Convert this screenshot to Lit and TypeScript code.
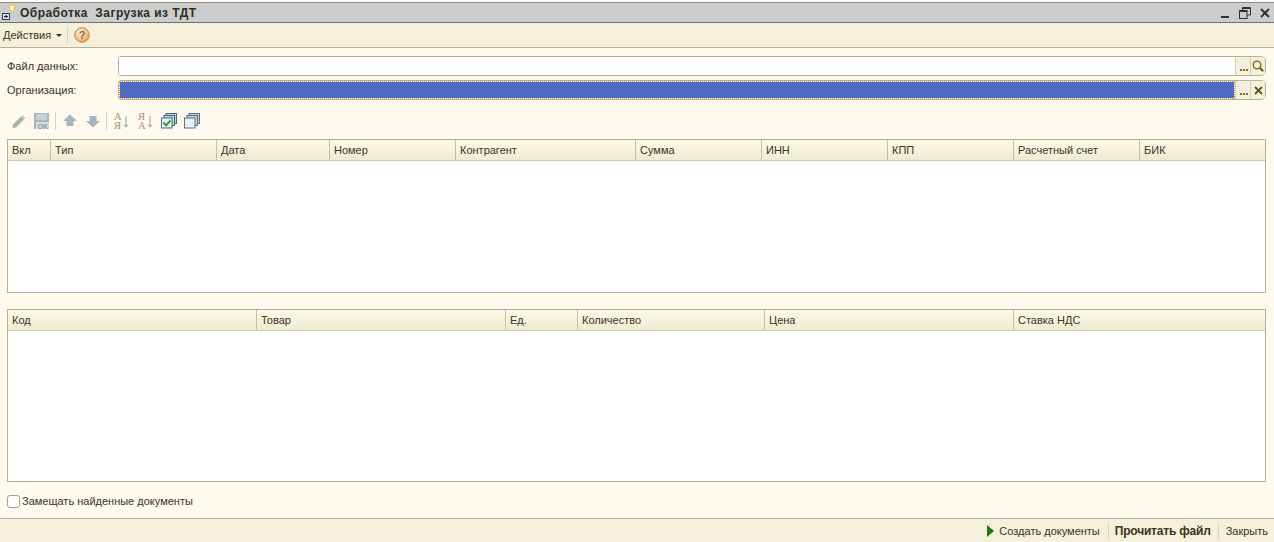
import { LitElement, html, css } from "lit";
import { customElement } from "lit/decorators.js";

const T1: [string, number][] = [["Вкл",43],["Тип",166],["Дата",113],["Номер",126],["Контрагент",180],["Сумма",126],["ИНН",126],["КПП",126],["Расчетный счет",126],["БИК",127]];
const T2: [string, number][] = [["Код",249],["Товар",249],["Ед.",72],["Количество",187],["Цена",249],["Ставка НДС",253]];

@customElement("app-root")
export class AppRoot extends LitElement {
  static styles = css`
    :host { display: flex; flex-direction: column; width: 1274px; height: 542px; overflow: hidden; background: #fffaee;
      font-family: "Liberation Sans", Arial, sans-serif; font-size: 11px; color: #40321e; }
    svg { display: block; flex: none; }
    .title { margin-top: 2px; flex: none; box-sizing: border-box; border-top: 1px solid #8c8c8c; border-bottom: 1px solid #6e6e6e;
      background: #cdcdcd; display: flex; align-items: center; padding: 0 4px 0 1px; height: 21px; }
    .ticon { margin-top: -2px; }
    .title b { margin-left: 2px; font-size: 12px; color: #2c2c28; white-space: pre; letter-spacing: .45px; }
    .spacer { flex: 1; }
    .winbtns { display: flex; gap: 9px; align-items: center; }
    .menu { flex: none; height: 25px; box-sizing: border-box; background: #f4f0dc; border-bottom: 1px solid #b9b18d; display: flex; align-items: center; padding-left: 3px; }
    .caret { width: 0; height: 0; border: 3px solid transparent; border-top-color: #40321e; border-bottom: 0; margin: 1px 5px 0 5px; }
    .vsep { width: 1px; height: 18px; background: #dcd6b8; }
    .help { margin-left: 6px; }
    .form { flex: none; display: grid; grid-template-columns: 118px 1148px; row-gap: 4px; padding-top: 8px; align-items: center; }
    .label { padding-left: 7px; }
    .field { height: 20px; box-sizing: border-box; border: 1px solid #b9b18d; border-radius: 3px 5px 5px 3px; background: #fff; display: flex; overflow: hidden; }
    .input { flex: 1; background: #fff; }
    .sel { flex: 1; margin: 1px; background: #4f6ac2; outline: 1px dotted #c8a028; }
    .fbtn { width: 15px; box-sizing: border-box; flex: none; background: #f4f0dc; border-left: 1px solid #d6d0b0; display: flex; align-items: center; justify-content: center; }
    .tools { flex: none; height: 20px; margin-top: 11px; display: flex; align-items: center; padding-left: 11px; }
    .i-save { margin-left: 6px; }
    .tsep { width: 1px; height: 18px; background: #dcd6b8; margin: 0 6px 0 5px; }
    .i-down { margin-left: 7px; }
    .i-sort2 { margin-left: 7px; }
    .i-stack { margin-left: 7px; }
    .table { flex: none; margin-left: 7px; width: 1259px; box-sizing: border-box; border: 1px solid #b9b18d; background: #fff; }
    .t1 { height: 154px; margin-top: 8px; }
    .t2 { height: 173px; margin-top: 16px; }
    .head { display: flex; height: 21px; box-sizing: border-box; border-bottom: 1px solid #d2cca8; background: linear-gradient(#fdf9e8, #efebd2); }
    .col { box-sizing: border-box; flex: none; border-right: 1px solid #c8c19c; padding-left: 4px; line-height: 20px; white-space: nowrap; overflow: hidden; }
    .col:last-child { border-right: 0; }
    .check { flex: none; display: flex; align-items: center; margin: 12px 0 0 7px; height: 14px; gap: 2px; }
    .box { width: 13px; height: 13px; box-sizing: border-box; border: 1px solid #a8a080; border-radius: 3px; background: #fff; }
    .footer { flex: none; margin-top: 10px; height: 24px; box-sizing: border-box; border-top: 1px solid #b9b18d; background: #f4f0dc; display: flex; align-items: center; justify-content: flex-end; padding-right: 6px; }
    .footer .sep { width: 1px; height: 18px; background: #dcd6b8; }
    .s1 { margin: 0 6px 0 8px; }
    .s2 { margin: 0 7px 0 7px; }
    .footer .go { margin-right: 4px; }
    .footer b { font-size: 12px; color: #40321e; letter-spacing: -.2px; }
  `;

  private cols(list: [string, number][]) {
    return list.map(([n, w]) => html`<div class="col" style="width:${w}px">${n}</div>`);
  }

  private dots() {
    return html`<svg width="9" height="18" viewBox="0 0 9 18" fill="#8a6a10"><rect x="1" y="12" width="2" height="2"/><rect x="4" y="12" width="2" height="2"/><rect x="7" y="12" width="2" height="2"/></svg>`;
  }

  render() {
    return html`
      <div class="title">
        <svg class="ticon" width="17" height="18" viewBox="0 0 17 18"><path d="M11 1l3.500 4L11 9 7.500 5z" fill="#fce878" stroke="#d8b840" stroke-width=".8"/><path d="M11 2.500l2 2.500-2 2.500L9 5z" fill="#fff8c8"/><rect x="1.500" y="10.500" width="7" height="6" fill="#dfe8f4" stroke="#283c64"/><path d="M3 13.500h4M5 12v3" stroke="#182848" stroke-width="1.200"/></svg>
        <b>Обработка  Загрузка из ТДТ</b>
        <span class="spacer"></span>
        <div class="winbtns">
          <svg width="9" height="12" viewBox="0 0 9 12"><rect x="0" y="9" width="8" height="2" fill="#303030"/></svg>
          <svg width="12" height="12" viewBox="0 0 12 12" fill="none" stroke="#303030"><rect x=".5" y="3.500" width="7.500" height="8"/><path d="M.5 4.500h7.500" /><path d="M3.500 3V.5h8v7.500H8M3.500 1.500h8"/></svg>
          <svg width="10" height="10" viewBox="0 0 10 10"><path d="M1 1l8 8M9 1l-8 8" stroke="#303030" stroke-width="2"/></svg>
        </div>
      </div>
      <div class="menu">
        <span>Действия</span><span class="caret"></span><span class="vsep"></span>
        <svg class="help" width="16" height="16" viewBox="0 0 16 16"><defs><radialGradient id="h" cx=".4" cy=".35" r=".7"><stop offset="0" stop-color="#fff4dc"/><stop offset="1" stop-color="#eda050"/></radialGradient></defs><circle cx="8" cy="8" r="7.300" fill="url(#h)" stroke="#c08a48"/><text x="8" y="12" text-anchor="middle" font-size="11" font-weight="bold" font-family="Liberation Sans" fill="#8a6a48">?</text></svg>
      </div>
      <div class="form">
        <div class="label">Файл данных:</div>
        <div class="field"><div class="input"></div><div class="fbtn">${this.dots()}</div>
          <div class="fbtn"><svg width="12" height="12" viewBox="0 0 12 12" fill="none" stroke="#7a5a10" stroke-width="1.300"><circle cx="5" cy="5" r="3.800"/><path d="M8 8l3.200 3.200" stroke-width="2"/></svg></div></div>
        <div class="label">Организация:</div>
        <div class="field"><div class="sel"></div><div class="fbtn">${this.dots()}</div>
          <div class="fbtn"><svg width="9" height="9" viewBox="0 0 9 9"><path d="M1 1l7 7M8 1L1 8" stroke="#6a5010" stroke-width="1.800"/></svg></div></div>
      </div>
      <div class="tools">
        <svg width="16" height="16" viewBox="0 0 16 16"><path d="M2 11.500L10 3.500l3 3L5 14.500l-3.500.5z" fill="#a8b8a0"/><path d="M10 3.500l1.500-1.500 3 3L13 6.500z" fill="#c4ccbc"/></svg>
        <svg class="i-save" width="17" height="16" viewBox="0 0 17 16"><rect x="1" y="0" width="15" height="16" fill="#a8b6c0"/><rect x="3" y="1" width="11" height="6" fill="#c6d0d8"/><rect x="3" y="9" width="13" height="7" fill="#d8dedf"/><text x="4.500" y="15.500" font-size="7" font-weight="bold" font-family="Liberation Sans" fill="#8898a4">OK</text></svg>
        <span class="tsep"></span>
        <svg width="16" height="16" viewBox="0 0 16 16"><path d="M8 1.500l7 6.500h-3.500v5h-7V8H1z" fill="#a4b4c0"/></svg>
        <svg class="i-down" width="16" height="16" viewBox="0 0 16 16"><path d="M8 14.500L15 8h-3.500V3h-7v5H1z" fill="#a4b4c0"/></svg>
        <span class="tsep"></span>
        <svg width="17" height="18" viewBox="0 0 17 18" fill="none"><text x="1" y="8" font-size="10.500" font-family="Liberation Serif" fill="#a09880">А</text><text x="1" y="16.500" font-size="10.500" font-family="Liberation Serif" fill="#a08880">Я</text><path d="M13 4v11M11 12.500l2 2.500 2-2.500" stroke="#90a0ac"/></svg>
        <svg class="i-sort2" width="17" height="18" viewBox="0 0 17 18" fill="none"><text x="1" y="8" font-size="10.500" font-family="Liberation Serif" fill="#a08880">Я</text><text x="1" y="16.500" font-size="10.500" font-family="Liberation Serif" fill="#a09880">А</text><path d="M13 4v11M11 12.500l2 2.500 2-2.500" stroke="#90a0ac"/></svg>
        <svg class="i-stack" width="16" height="16" viewBox="0 0 16 16" fill="#b8d0e0" stroke="#3f6f78"><rect x="5" y=".5" width="10.500" height="10"/><rect x="3" y="2.500" width="10.500" height="10"/><rect x=".5" y="5" width="10.500" height="10" fill="#eef6fa"/><path d="M2.500 9.500l2.500 3 4.500-5" stroke="#30a030" stroke-width="2" fill="none"/></svg>
        <svg class="i-stack" width="16" height="16" viewBox="0 0 16 16" fill="#b8d0e0" stroke="#5a7480"><rect x="5" y=".5" width="10.500" height="10"/><rect x="3" y="2.500" width="10.500" height="10"/><rect x=".5" y="5" width="10.500" height="10" fill="#e8f0f6"/></svg>
      </div>
      <div class="table t1"><div class="head">${this.cols(T1)}</div></div>
      <div class="table t2"><div class="head">${this.cols(T2)}</div></div>
      <div class="check"><span class="box"></span><span>Замещать найденные документы</span></div>
      <div class="footer">
        <svg class="go" width="8" height="12" viewBox="0 0 8 12"><path d="M0 0l7 6-7 6z" fill="#1e7a0c"/></svg>
        <span>Создать документы</span><span class="sep s1"></span><b>Прочитать файл</b><span class="sep s2"></span><span>Закрыть</span>
      </div>
    `;
  }
}
